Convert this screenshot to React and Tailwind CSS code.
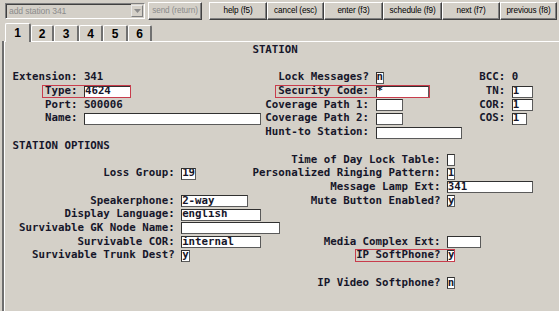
const MONO = "font-['DejaVu_Sans_Mono',monospace]"

const WIDTH = {
  1: 'w-[calc(1ch+2px)]',
  2: 'w-[calc(2ch+2px)]',
  3: 'w-[calc(3ch+2px)]',
  4: 'w-[calc(4ch+2px)]',
  5: 'w-[calc(5ch+2px)]',
  7: 'w-[calc(7ch+2px)]',
  8: 'w-[calc(8ch+2px)]',
  10: 'w-[calc(10ch+2px)]',
  12: 'w-[calc(12ch+2px)]',
  13: 'w-[calc(13ch+2px)]',
  15: 'w-[calc(15ch+2px)]',
  27: 'w-[calc(27ch+2px)]',
}

const T = (col, s) => ({ kind: 'text', col, s })
const F = (col, n, v = '') => ({ kind: 'field', col, n, v })
const R = (col, cls, items) => ({ kind: 'red', col, cls, items })

const RED = 'flex items-center shrink-0 h-[13px] outline outline-[#c83c4c] -outline-offset-1'

const lines = [
  [T(37, 'STATION')],
  [],
  [T(0, 'Extension: 341'), T(41, 'Lock Messages?'), F(56, 1, 'n'), T(72, 'BCC: 0')],
  [
    R(5, `${RED} -ml-[3px] pl-[3px] -mr-[2px] pr-[2px]`, [T(5, 'Type:'), F(11, 7, '4624')]),
    R(41, `${RED} -ml-[3px] pl-[3px] -mr-[3px] pr-[3px]`, [T(41, 'Security Code:'), F(56, 8, '*')]),
    T(73, 'TN:'),
    F(77, 3, '1'),
  ],
  [T(5, 'Port: S00006'), T(39, 'Coverage Path 1:'), F(56, 4), T(72, 'COR:'), F(77, 3, '1')],
  [T(5, 'Name:'), F(11, 27), T(39, 'Coverage Path 2:'), F(56, 4), T(72, 'COS:'), F(77, 2, '1')],
  [T(39, 'Hunt-to Station:'), F(56, 13)],
  [T(0, 'STATION OPTIONS')],
  [T(43, 'Time of Day Lock Table:'), F(67, 1)],
  [T(14, 'Loss Group:'), F(26, 2, '19'), T(37, 'Personalized Ringing Pattern:'), F(67, 1, '1')],
  [T(49, 'Message Lamp Ext:'), F(67, 13, '341')],
  [T(12, 'Speakerphone:'), F(26, 10, '2-way'), T(46, 'Mute Button Enabled?'), F(67, 1, 'y')],
  [T(8, 'Display Language:'), F(26, 12, 'english')],
  [T(1, 'Survivable GK Node Name:'), F(26, 15)],
  [T(10, 'Survivable COR:'), F(26, 12, 'internal'), T(48, 'Media Complex Ext:'), F(67, 5)],
  [
    T(3, 'Survivable Trunk Dest?'),
    F(26, 1, 'y'),
    R(53, `${RED} -ml-px pl-px -mr-[2px] pr-[2px]`, [T(53, 'IP SoftPhone?'), F(67, 1, 'y')]),
  ],
  [],
  [T(47, 'IP Video Softphone?'), F(67, 1, 'n')],
]

function Field({ n, v }) {
  return (
    <span
      className={`${WIDTH[n]} -mr-[2px] shrink-0 h-[12px] flex items-center bg-white border border-t-[#303030] border-l-[#303030] border-b-[#5a5a5a] border-r-[#5a5a5a] leading-none overflow-hidden`}
    >
      {v}
    </span>
  )
}

function renderItems(items, start) {
  let cur = start
  const out = []
  items.forEach((it, i) => {
    const pad = ' '.repeat(Math.max(0, it.col - cur))
    if (it.kind === 'text') {
      out.push(
        <span key={i} className="shrink-0">
          {pad + it.s}
        </span>
      )
      cur = it.col + it.s.length
    } else if (it.kind === 'field') {
      if (pad) out.push(<span key={`p${i}`} className="shrink-0">{pad}</span>)
      out.push(<Field key={i} n={it.n} v={it.v} />)
      cur = it.col + it.n
    } else {
      if (pad) out.push(<span key={`p${i}`} className="shrink-0">{pad}</span>)
      const [inner, end] = renderItems(it.items, it.col)
      out.push(
        <span key={i} className={it.cls}>
          {inner}
        </span>
      )
      cur = end
    }
  })
  return [out, cur]
}

const Btn = ({ label, w, ml, disabled }) => (
  <div
    className={`${w} ${ml} h-[18px] shrink-0 flex items-center justify-center whitespace-nowrap border border-t-white border-l-white border-r-[#404040] border-b-[#404040] shadow-[inset_-1px_-1px_0_#808080] ${
      disabled ? 'text-[#8c8c8c]' : 'text-black'
    }`}
  >
    {label}
  </div>
)

const tabs = [
  { n: '1', w: 'w-[26px]' },
  { n: '2', w: 'w-[23px]' },
  { n: '3', w: 'w-[25px]' },
  { n: '4', w: 'w-[24px]' },
  { n: '5', w: 'w-[25px]' },
  { n: '6', w: 'w-[24px]' },
]

export default function App() {
  return (
    <div className="w-[559px] h-[311px] overflow-hidden bg-[#d4d0c8] flex flex-col">
      {/* toolbar */}
      <div className="h-[22px] shrink-0 flex items-start pt-[2px] font-['Liberation_Sans',Arial,sans-serif] text-[8.2px] tracking-[-0.1px]">
        <div className="ml-[5px] mt-px w-[140px] h-[16px] shrink-0 flex border border-t-[#808080] border-l-[#808080] border-b-white border-r-white">
          <div className="flex-1 flex items-center pl-[3px] text-[#8c8c8c] text-[8.6px] shadow-[inset_1px_1px_0_#404040]">
            add station 341
          </div>
          <div className="w-[12px] my-px mr-px flex items-center justify-center border border-t-[#e8e8e8] border-l-[#e8e8e8] border-r-[#808080] border-b-[#808080]">
            <svg width="7" height="4" viewBox="0 0 7 4">
              <path d="M0 0h7L3.5 4z" fill="#8c8c8c" />
            </svg>
          </div>
        </div>
        <Btn label="send (return)" w="w-[54px]" ml="ml-[3px]" disabled />
        <Btn label="help (f5)" w="w-[58px]" ml="ml-[7px]" />
        <Btn label="cancel (esc)" w="w-[57px]" ml="ml-0" />
        <Btn label="enter (f3)" w="w-[59px]" ml="ml-0" />
        <Btn label="schedule (f9)" w="w-[59px]" ml="ml-0" />
        <Btn label="next (f7)" w="w-[58px]" ml="ml-0" />
        <Btn label="previous (f8)" w="w-[57px]" ml="ml-0" />
      </div>

      {/* tabs */}
      <div className="h-[19px] shrink-0 flex items-end pl-[5px] font-['Liberation_Sans',Arial,sans-serif] text-[12px] font-bold text-black">
        {tabs.map((t, i) => (
          <div
            key={t.n}
            className={`${t.w} shrink-0 flex items-center justify-center border-t border-l border-white border-r-2 border-r-[#707070] rounded-t-[2px] ${
              i === 0 ? 'h-[19px] relative z-10 -mb-px bg-[#d4d0c8]' : 'h-[16px]'
            }`}
          >
            {t.n}
          </div>
        ))}
      </div>

      {/* station form */}
      <div className="flex-1 ml-[2px] border-l-2 border-[#6e6e6e]">
        <div
          className={`h-full border-l border-t border-white pl-[7.6px] pt-[1.6px] ${MONO} text-[10.78px] font-bold text-[#16162a] whitespace-pre`}
        >
          {lines.map((items, r) => (
            <div key={r} className="h-[13.7px] flex items-center leading-none">
              {renderItems(items, 0)[0]}
            </div>
          ))}
        </div>
      </div>
    </div>
  )
}
